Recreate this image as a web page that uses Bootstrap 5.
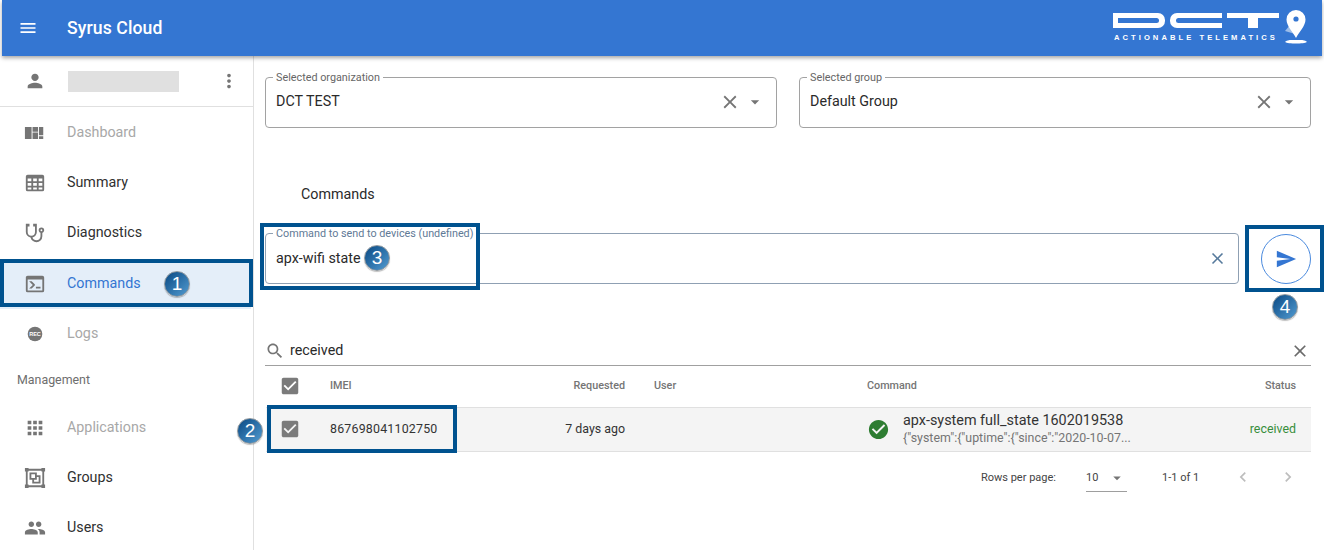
<!DOCTYPE html>
<html lang="en">
<head>
<meta charset="utf-8">
<title>Syrus Cloud</title>
<link href="https://cdn.jsdelivr.net/npm/bootstrap@5.3.0/dist/css/bootstrap.min.css" rel="stylesheet">
<style>
html,body{height:550px;overflow:hidden;background:#fff}
body{font-family:Roboto,"Liberation Sans",sans-serif;color:#2a2a2a;font-size:14px;position:relative}
.app-wrap{padding:0 2px}
.app-bar{background:#3476d2;height:56px;padding:0 0 0 16px;box-shadow:0 2px 4px rgba(0,0,0,.35);position:relative;z-index:2;flex-wrap:nowrap}
.app-bar svg.menu-ic{width:20px;height:20px;fill:#fff}
.app-title{color:#fff;font-size:17.6px;font-weight:500;margin-left:29px;letter-spacing:.1px}
.brand-logo{margin-right:14px;margin-top:-1px;flex:none}
.dct-mark{gap:5px;width:166px}
.dl{height:15px;width:52px;flex:none;background:#fff;position:relative}
.dl-d{border-radius:0 7px 7px 0;width:52px}
.dl-c{border-radius:7px 0 0 7px}
.dl-t{background:none;width:52px}
.dl-d::after,.dl-c::after{content:"";position:absolute;top:5px;height:5px;background:#3476d2}
.dl-d::after{left:5px;right:6px;border-radius:0 3px 3px 0}
.dl-c::after{left:6px;right:0;border-radius:3px 0 0 3px}
.dl-t::before{content:"";position:absolute;left:0;right:0;top:0;height:5px;background:#fff}
.dl-t::after{content:"";position:absolute;left:21px;width:10px;top:0;bottom:0;background:#fff}
.tagline{color:#fff;font-family:"Liberation Sans",sans-serif;font-size:7.6px;font-weight:700;letter-spacing:3.05px;line-height:9px;margin-top:5px;margin-left:1px;white-space:nowrap;width:166px;overflow:visible}
.pin{width:24px;height:38px;flex:none;margin-left:4px}
.shell{height:494px}
.side-nav{width:254px;flex:none;border-right:1px solid #e0e0e0;height:494px;overflow:hidden}
.user-row{height:51px;border-bottom:1px solid #e0e0e0;padding:0 13px 0 24px}
.ic{width:22px;height:22px;fill:#757575;flex:none}
.user-blank{width:111px;height:21px;background:#e0e0e0;margin-left:22px;margin-right:auto}
.nav-stack{padding-top:1px}
.nav-it{height:50px;border:0;padding:0 0 0 24px;color:#303030;font-size:14.3px;background:transparent;border-radius:0}
.nav-it .nav-lb{margin-left:21px}
.nav-off{color:#a8a8a8}
.nav-on{color:#3476d2;background:#e4eef9;margin-right:2px;margin-top:1px}
.nav-sec{height:44px;padding:0 0 2px 17px;font-size:12.4px;color:#6e6e6e}
.main-col{padding:21px 13px 0 11px;min-width:0}
.pick-row{gap:22px}
.out-field{height:51px;border:1px solid #a2a2a2;border-radius:4px;position:relative;padding:0 15px 0 10px;flex:1 1 0;min-width:0;font-size:14.3px}
.pick-row .out-field{padding-bottom:2px}
.out-label{position:absolute;left:7px;top:-7px;background:#fff;padding:0 3px;font-size:10.8px;line-height:13px;color:#666;white-space:nowrap}
.out-field .x-ic{width:22px;height:22px;fill:#757575;margin-left:auto;flex:none}
.out-field .dd-ic{width:20px;height:20px;fill:#757575;margin-left:4px;margin-right:-4px;flex:none}
.cmd-title{font-size:14.3px;padding-left:36px;line-height:20px;margin-top:56px;height:20px}
.cmd-row{margin-top:29px;gap:22px}
.cmd-field{border-color:#8fa0b3;flex:0 0 974px;padding-right:11px}
.cmd-field .out-label{color:#5f7a96}
.cmd-field .x-ic{fill:#567a9c;width:19px;height:19px}
.send-btn{width:50px;height:50px;border-radius:50%;border:1px solid #4a8ade;background:#fff;padding:0}
.send-btn svg{width:22px;height:22px;fill:#3476d2;display:block;margin:auto}
.search-row{margin-top:49px;height:33px;border-bottom:1px solid #a0a0a0;font-size:14.3px;padding:4px 1px 0 0}
.search-row .s-ic{width:20px;height:20px;fill:#757575;margin-right:5px;flex:none}
.search-row .x-ic{width:20px;height:20px;fill:#6b6b6b;margin-left:auto}
.table.cmd-table{margin:0 0 0 1px;table-layout:fixed;width:1045px}
.table.cmd-table>*>*>*{padding:0;border-bottom:1px solid #e0e0e0;vertical-align:middle;box-shadow:none}
.table.cmd-table thead th{height:41px;font-size:10.8px;font-weight:500;color:#757575}
.table.cmd-table tbody td{height:44px;background:#f4f4f4;font-size:12.4px;color:#333}
.cb-ic{width:22px;height:22px;fill:#7b7b7b;display:block;margin-left:13px}
.table.cmd-table tbody td.imei{letter-spacing:.2px}
.table.cmd-table>*>*>.pl-user{padding-left:29px}
.table.cmd-table>*>*>.pr-st{padding-right:15px}
.cmd-main{font-size:14.4px;line-height:18px;color:#333}
.cmd-sub{font-size:12.4px;line-height:16px;color:#757575;white-space:nowrap}
.ok-ic{width:23px;height:23px;fill:#2e7d32;flex:none;margin-right:13px}
.table.cmd-table tbody td.st-ok{color:#388e3c}
.pager{height:50px;font-size:11px;color:#444;padding:0 13px 0 0}
.pager>span{padding-top:4px}
.pg-sel{width:41px;height:30px;border-bottom:1px solid #9e9e9e;margin:0 0 0 30px;font-size:11px;padding-top:4px}
.pg-sel svg{width:18px;height:18px;fill:#757575;margin-left:auto;margin-right:1px}
.pg-count{margin-left:35px;width:71px}
.pg-nav{width:20px;height:20px;fill:#bdbdbd;flex:none}
.pg-next{margin-left:25px}
.note-box{position:absolute;border:4px solid #00528f;z-index:5;pointer-events:none}
.note-num{position:absolute;z-index:6;width:26px;height:26px;border-radius:50%;color:#fff;font-size:19px;line-height:24px;text-align:center;font-family:"Liberation Sans",sans-serif;background:linear-gradient(135deg,#14558f 15%,#4b93c9 90%);border:1px solid #8f979d;box-shadow:0 1px 1px rgba(0,0,0,.25)}
</style>
</head>
<body>
<div class="app-wrap">
<nav class="navbar app-bar d-flex align-items-center">
  <svg class="menu-ic" viewBox="0 0 24 24"><path d="M3 18h18v-2H3v2zm0-5h18v-2H3v2zm0-7v2h18V6H3z"/></svg>
  <span class="app-title">Syrus Cloud</span>
  <div class="brand-logo d-flex align-items-center ms-auto">
    <div>
      <div class="dct-mark d-flex" role="img" aria-label="DCT"><span class="dl dl-d"></span><span class="dl dl-c"></span><span class="dl dl-t"></span></div>
      <div class="tagline">ACTIONABLE TELEMATICS</div>
    </div>
    <svg class="pin" viewBox="0 0 24 38"><path d="M1 22l5-6 5 9z" fill="#9dbde8"/><path d="M12 1a9.500 9.500 0 0 0-9.500 9.500C2.500 17 9 23 12 29c3-6 9.500-12 9.500-18.500A9.500 9.500 0 0 0 12 1z" fill="#fff"/><circle cx="12" cy="10" r="2.600" fill="#3476d2"/><path d="M1 33c2-2 6-2 6-2h10s4 0 6 2c-3 2-19 2-22 0z" fill="#fff"/></svg>
  </div>
</nav>
</div>
<div class="shell d-flex">
  <aside class="side-nav">
    <div class="user-row d-flex align-items-center">
      <svg class="ic" viewBox="0 0 24 24"><path d="M12 12c2.210 0 4-1.790 4-4s-1.790-4-4-4-4 1.790-4 4 1.790 4 4 4zm0 2c-2.670 0-8 1.340-8 4v2h16v-2c0-2.660-5.330-4-8-4z"/></svg>
      <span class="user-blank"></span>
      <svg class="ic" viewBox="0 0 24 24"><path d="M12 8c1.100 0 2-.9 2-2s-.9-2-2-2-2 .9-2 2 .9 2 2 2zm0 2c-1.100 0-2 .9-2 2s.9 2 2 2 2-.9 2-2-.9-2-2-2zm0 6c-1.100 0-2 .9-2 2s.9 2 2 2 2-.9 2-2-.9-2-2-2z"/></svg>
    </div>
    <div class="list-group list-group-flush nav-stack">
      <a class="list-group-item nav-it nav-off d-flex align-items-center"><svg class="ic" viewBox="0 0 24 24"><path d="M1 5.500h7.300v13H1zM9.300 5.500h6v5h-6zM9.300 11.500h6v7h-6zM16.300 5.500H21v9h-4.700zM16.300 15.500H21v3h-4.700z"/></svg><span class="nav-lb">Dashboard</span></a>
      <a class="list-group-item nav-it d-flex align-items-center"><svg class="ic" viewBox="0 0 24 24"><path fill-rule="evenodd" d="M4 3h16a2 2 0 0 1 2 2v14a2 2 0 0 1-2 2H4a2 2 0 0 1-2-2V5a2 2 0 0 1 2-2zM4 7v3h4V7zm6 0v3h4V7zm6 0v3h4V7zM4 12v3h4v-3zm6 0v3h4v-3zm6 0v3h4v-3zM4 17v2h4v-2zm6 0v2h4v-2zm6 0v2h4v-2z"/></svg><span class="nav-lb">Summary</span></a>
      <a class="list-group-item nav-it d-flex align-items-center"><svg class="ic" viewBox="0 0 24 24"><path d="M19 8C19.560 8 20 8.430 20 9A1 1 0 0 1 19 10C18.430 10 18 9.550 18 9C18 8.430 18.430 8 19 8M2 2V11C2 13.960 4.190 16.500 7.140 16.910C7.760 19.920 10.420 22 13.500 22A6.500 6.500 0 0 0 20 15.500V11.810C21.160 11.390 22 10.290 22 9A3 3 0 0 0 19 6A3 3 0 0 0 16 9C16 10.290 16.840 11.400 18 11.810V15.410C18 17.910 16 19.910 13.500 19.910C11.500 19.910 9.820 18.700 9.220 16.900C12 16.300 14 13.800 14 11V2H10V5H12V11A4 4 0 0 1 8 15A4 4 0 0 1 4 11V5H6V2H2Z"/></svg><span class="nav-lb">Diagnostics</span></a>
      <a class="list-group-item nav-it nav-on d-flex align-items-center"><svg class="ic" viewBox="0 0 24 24"><path d="M20 19V7H4V19H20M20 3A2 2 0 0 1 22 5V19A2 2 0 0 1 20 21H4A2 2 0 0 1 2 19V5C2 3.890 2.900 3 4 3H20M13 17V15H18V17H13M9.580 13L5.570 9H8.400L11.700 12.300C12.090 12.690 12.090 13.330 11.700 13.720L8.420 17H5.590L9.580 13Z"/></svg><span class="nav-lb">Commands</span></a>
      <a class="list-group-item nav-it nav-off d-flex align-items-center"><svg class="ic" viewBox="0 0 24 24"><circle cx="12" cy="12" r="8"/><text x="12" y="14" text-anchor="middle" font-size="6" font-weight="700" fill="#fff" font-family="Liberation Sans, sans-serif">REC</text></svg><span class="nav-lb">Logs</span></a>
      <div class="nav-sec d-flex align-items-center">Management</div>
      <a class="list-group-item nav-it nav-off d-flex align-items-center"><svg class="ic" viewBox="0 0 24 24"><path d="M4 8h4V4H4v4zm6 12h4v-4h-4v4zm-6 0h4v-4H4v4zm0-6h4v-4H4v4zm6 0h4v-4h-4v4zm6-10v4h4V4h-4zm-6 4h4V4h-4v4zm6 6h4v-4h-4v4zm0 6h4v-4h-4v4z"/></svg><span class="nav-lb">Applications</span></a>
      <a class="list-group-item nav-it d-flex align-items-center"><svg class="ic" viewBox="0 0 24 24"><path d="M1 1V5H2V19H1V23H5V22H19V23H23V19H22V5H23V1H19V2H5V1M5 4H19V5H20V19H19V20H5V19H4V5H5M6 6V14H9V18H18V9H14V6M8 8H12V12H8M14 11H16V16H11V14H14"/></svg><span class="nav-lb">Groups</span></a>
      <a class="list-group-item nav-it d-flex align-items-center"><svg class="ic" viewBox="0 0 24 24"><path d="M16 11c1.660 0 2.990-1.340 2.990-3S17.660 5 16 5c-1.660 0-3 1.340-3 3s1.340 3 3 3zm-8 0c1.660 0 2.990-1.340 2.990-3S9.660 5 8 5C6.340 5 5 6.340 5 8s1.340 3 3 3zm0 2c-2.330 0-7 1.170-7 3.500V19h14v-2.500c0-2.330-4.670-3.500-7-3.500zm8 0c-.29 0-.62.02-.97.05 1.160.84 1.970 1.970 1.970 3.450V19h6v-2.500c0-2.330-4.670-3.500-7-3.500z"/></svg><span class="nav-lb">Users</span></a>
    </div>
  </aside>
  <main class="main-col flex-grow-1">
    <div class="pick-row d-flex">
      <div class="out-field d-flex align-items-center"><label class="out-label">Selected organization</label>DCT TEST
        <svg class="x-ic" viewBox="0 0 24 24"><path d="M19 6.410L17.590 5 12 10.590 6.410 5 5 6.410 10.590 12 5 17.590 6.410 19 12 13.410 17.590 19 19 17.590 13.410 12z"/></svg>
        <svg class="dd-ic" viewBox="0 0 24 24"><path d="M7 10l5 5 5-5z"/></svg></div>
      <div class="out-field d-flex align-items-center"><label class="out-label">Selected group</label>Default Group
        <svg class="x-ic" viewBox="0 0 24 24"><path d="M19 6.410L17.590 5 12 10.590 6.410 5 5 6.410 10.590 12 5 17.590 6.410 19 12 13.410 17.590 19 19 17.590 13.410 12z"/></svg>
        <svg class="dd-ic" viewBox="0 0 24 24"><path d="M7 10l5 5 5-5z"/></svg></div>
    </div>
    <div class="cmd-title">Commands</div>
    <div class="cmd-row d-flex align-items-center">
      <div class="out-field cmd-field d-flex align-items-center"><label class="out-label">Command to send to devices (undefined)</label>apx-wifi state
        <svg class="x-ic" viewBox="0 0 24 24"><path d="M19 6.410L17.590 5 12 10.590 6.410 5 5 6.410 10.590 12 5 17.590 6.410 19 12 13.410 17.590 19 19 17.590 13.410 12z"/></svg></div>
      <button class="btn send-btn" type="button" aria-label="Send"><svg viewBox="0 0 24 24"><path d="M2.010 21L23 12 2.010 3 2 10l15 2-15 2z"/></svg></button>
    </div>
    <div class="search-row d-flex align-items-center">
      <svg class="s-ic" viewBox="0 0 24 24"><path d="M15.500 14h-.79l-.28-.27C15.410 12.590 16 11.110 16 9.500 16 5.910 13.090 3 9.500 3S3 5.910 3 9.500 5.910 16 9.500 16c1.610 0 3.090-.59 4.230-1.570l.27.28v.79l5 4.990L20.490 19l-4.990-5zm-6 0C7.010 14 5 11.990 5 9.500S7.010 5 9.500 5 14 7.010 14 9.500 11.990 14 9.500 14z"/></svg>
      received
      <svg class="x-ic" viewBox="0 0 24 24"><path d="M19 6.410L17.590 5 12 10.590 6.410 5 5 6.410 10.590 12 5 17.590 6.410 19 12 13.410 17.590 19 19 17.590 13.410 12z"/></svg>
    </div>
    <table class="table cmd-table">
      <colgroup><col style="width:64px"><col style="width:200px"><col style="width:95px"><col style="width:242px"><col style="width:310px"><col></colgroup>
      <thead><tr>
        <th><svg class="cb-ic" viewBox="0 0 24 24"><path d="M19 3H5c-1.110 0-2 .9-2 2v14c0 1.100.89 2 2 2h14c1.110 0 2-.9 2-2V5c0-1.100-.89-2-2-2zm-9 14l-5-5 1.410-1.410L10 14.170l7.590-7.590L19 8l-9 9z"/></svg></th>
        <th>IMEI</th><th class="text-end">Requested</th><th class="pl-user">User</th><th>Command</th><th class="text-end pr-st">Status</th>
      </tr></thead>
      <tbody><tr>
        <td><svg class="cb-ic" viewBox="0 0 24 24"><path d="M19 3H5c-1.110 0-2 .9-2 2v14c0 1.100.89 2 2 2h14c1.110 0 2-.9 2-2V5c0-1.100-.89-2-2-2zm-9 14l-5-5 1.410-1.410L10 14.170l7.590-7.590L19 8l-9 9z"/></svg></td>
        <td class="imei">867698041102750</td>
        <td class="text-end">7 days ago</td>
        <td></td>
        <td><div class="d-flex align-items-center"><svg class="ok-ic" viewBox="0 0 24 24"><path d="M12 2C6.480 2 2 6.480 2 12s4.480 10 10 10 10-4.480 10-10S17.520 2 12 2zm-2 15l-5-5 1.410-1.410L10 14.170l7.590-7.590L19 8l-9 9z"/></svg>
          <div><div class="cmd-main">apx-system full_state 1602019538</div><div class="cmd-sub">{"system":{"uptime":{"since":"2020-10-07...</div></div></div></td>
        <td class="text-end pr-st st-ok">received</td>
      </tr></tbody>
    </table>
    <div class="pager d-flex align-items-center justify-content-end">
      <span>Rows per page:</span>
      <div class="pg-sel d-flex align-items-center">10<svg viewBox="0 0 24 24"><path d="M7 10l5 5 5-5z"/></svg></div>
      <span class="pg-count">1-1 of 1</span>
      <svg class="pg-nav" viewBox="0 0 24 24"><path d="M15.410 7.410L14 6l-6 6 6 6 1.410-1.410L10.830 12z"/></svg>
      <svg class="pg-nav pg-next" viewBox="0 0 24 24"><path d="M10 6L8.590 7.410 13.170 12l-4.580 4.580L10 18l6-6z"/></svg>
    </div>
  </main>
</div>
<div class="note-box" style="left:0;top:259px;width:253px;height:48px"></div>
<div class="note-box" style="left:267px;top:405px;width:190px;height:48px"></div>
<div class="note-box" style="left:260px;top:223px;width:220px;height:67px"></div>
<div class="note-box" style="left:1245px;top:225px;width:79px;height:67px"></div>
<span class="note-num" style="left:164px;top:271px">1</span>
<span class="note-num" style="left:237px;top:418px">2</span>
<span class="note-num" style="left:364px;top:245px">3</span>
<span class="note-num" style="left:1272px;top:294px">4</span>
</body>
</html>
